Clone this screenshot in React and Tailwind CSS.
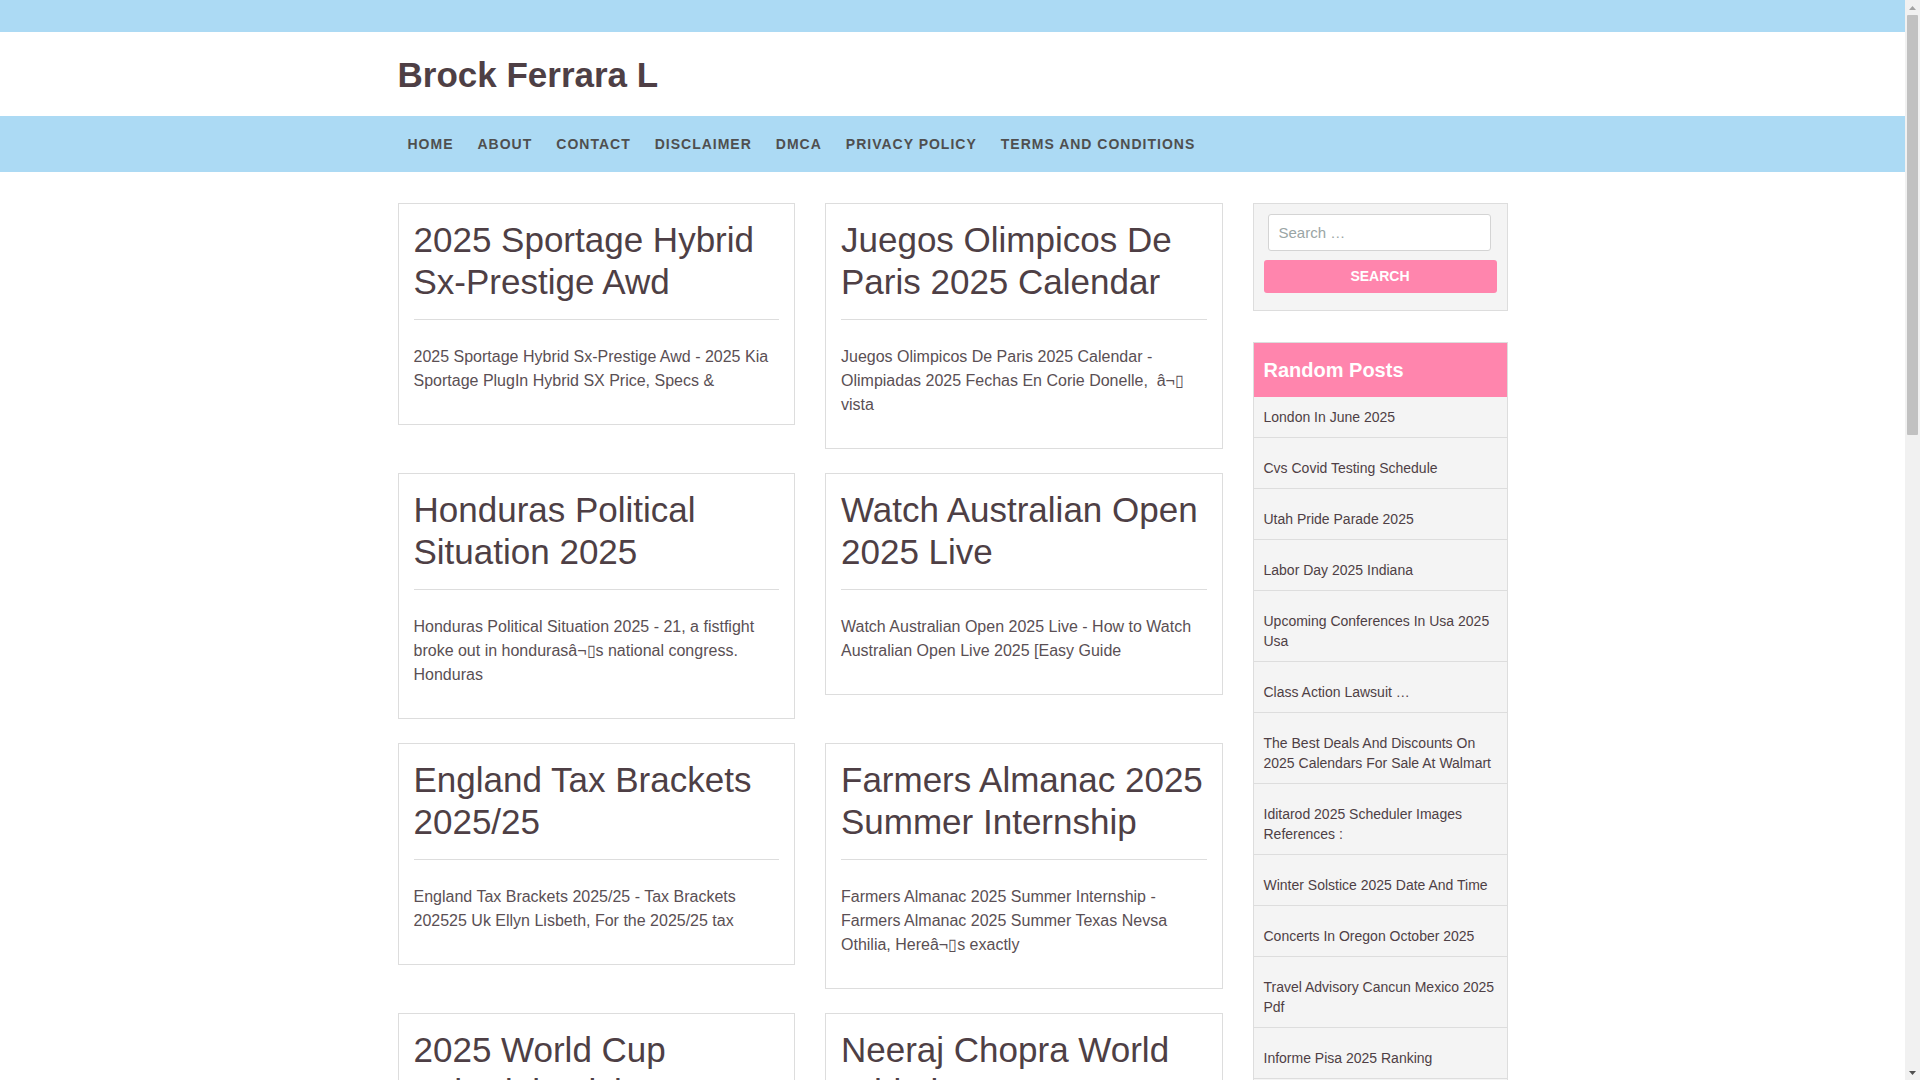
import React from 'react';

const navItems = ['Home', 'About', 'Contact', 'Disclaimer', 'DMCA', 'Privacy Policy', 'Terms and Conditions'];

const posts = [
    {
        title: '2025 Sportage Hybrid Sx-Prestige Awd',
        excerpt: '2025 Sportage Hybrid Sx-Prestige Awd - 2025 Kia Sportage PlugIn Hybrid SX Price, Specs &',
    },
    {
        title: 'Juegos Olimpicos De Paris 2025 Calendar',
        excerpt: 'Juegos Olimpicos De Paris 2025 Calendar - Olimpiadas 2025 Fechas En Corie Donelle,\u00a0 \u00e2\u00ac\u25af vista',
    },
    {
        title: 'Honduras Political Situation 2025',
        excerpt: 'Honduras Political Situation 2025 - 21, a fistfight broke out in honduras\u00e2\u00ac\u25afs national congress. Honduras',
    },
    {
        title: 'Watch Australian Open 2025 Live',
        excerpt: 'Watch Australian Open 2025 Live - How to Watch Australian Open Live 2025 [Easy Guide',
    },
    {
        title: 'England Tax Brackets 2025/25',
        excerpt: 'England Tax Brackets 2025/25 - Tax Brackets 202525 Uk Ellyn Lisbeth, For the 2025/25 tax',
    },
    {
        title: 'Farmers Almanac 2025 Summer Internship',
        excerpt: 'Farmers Almanac 2025 Summer Internship - Farmers Almanac 2025 Summer Texas Nevsa Othilia, Here\u00e2\u00ac\u25afs exactly',
    },
    {
        title: '2025 World Cup Schedule Tickets',
        excerpt: '2025 World Cup Schedule Tickets - Everything you need to know about the tournament',
    },
    {
        title: 'Neeraj Chopra World Athletics 2025',
        excerpt: 'Neeraj Chopra World Athletics 2025 - The javelin star is ready for the championships',
    },
];

const randomPosts = [
    'London In June 2025',
    'Cvs Covid Testing Schedule',
    'Utah Pride Parade 2025',
    'Labor Day 2025 Indiana',
    'Upcoming Conferences In Usa 2025 Usa',
    'Class Action Lawsuit \u2026',
    'The Best Deals And Discounts On 2025 Calendars For Sale At Walmart',
    'Iditarod 2025 Scheduler Images References :',
    'Winter Solstice 2025 Date And Time',
    'Concerts In Oregon October 2025',
    'Travel Advisory Cancun Mexico 2025 Pdf',
    'Informe Pisa 2025 Ranking',
    'Chinese New Year 2025 Animal',
];

function PostCard({ post }) {
    return (
        <article className="border border-[#dddddd] bg-white p-[15px]">
            <h2 className="text-[35px] leading-[42px] font-normal text-[#4e3f45] mb-[16px]">
                {post.title}
            </h2>
            <hr className="border-0 border-t border-[#dddddd]" />
            <p className="mt-[25px] mb-[16px] text-[16px] leading-[24px] text-[#5a4f54]">
                {post.excerpt}
            </p>
        </article>
    );
}

// the browser scrollbar seen in the screenshot
function Scrollbar() {
    return (
        <div className="w-[15px] h-screen shrink-0 flex flex-col bg-[#f1f1f1]">
            <div className="h-[15px] flex items-center justify-center">
                <svg width="7" height="4" viewBox="0 0 7 4"><path d="M0 4 L3.5 0 L7 4 Z" fill="#a3a3a3" /></svg>
            </div>
            <div className="flex-1 px-[2px]">
                <div className="h-[420px] rounded-[1px] bg-[#c1c1c1]" />
            </div>
            <div className="h-[15px] flex items-center justify-center">
                <svg width="7" height="4" viewBox="0 0 7 4"><path d="M0 0 L3.5 4 L7 0 Z" fill="#505050" /></svg>
            </div>
        </div>
    );
}

export default function App() {
    return (
        <div className="flex h-screen overflow-hidden bg-white font-['Liberation_Sans',Arial,sans-serif]">
            <div className="flex-1 min-w-0 overflow-hidden">
                {/* Top strip */}
                <div className="h-[32px] bg-[#acdaf4]" />

                {/* Site title */}
                <header className="max-w-[1140px] mx-auto px-[15px] pt-[22px] pb-[20px]">
                    <h1 className="text-[35px] leading-[42px] font-bold text-[#4e3f45]">Brock Ferrara L</h1>
                </header>

                {/* Navigation */}
                <nav className="h-[56px] bg-[#acdaf4]">
                    <ul className="max-w-[1140px] h-full mx-auto px-[15px] flex items-center gap-[4px]">
                        {navItems.map((item) => (
                            <li
                                key={item}
                                className="px-[10px] text-[14px] font-bold uppercase tracking-[1px] text-[#4f4f4f] cursor-pointer"
                            >
                                {item}
                            </li>
                        ))}
                    </ul>
                </nav>

                {/* Content */}
                <div className="max-w-[1140px] mx-auto flex pt-[31px]">
                    <main className="w-[855px] px-[15px]">
                        <div className="grid grid-cols-2 gap-x-[30px] gap-y-[24px] items-start">
                            {posts.map((post) => (
                                <PostCard key={post.title} post={post} />
                            ))}
                        </div>
                    </main>

                    <aside className="w-[285px] px-[15px]">
                        {/* Search */}
                        <div className="border border-[#dddddd] bg-[#f4f4f4] pt-[10px] pb-[17px] px-[10px]">
                            <input
                                type="search"
                                placeholder="Search …"
                                className="block w-[223px] mx-[4px] h-[37px] rounded-[3px] border border-[#d4d4d4] bg-white px-[10px] text-[15px] text-[#4e3f45] placeholder:text-[#9aa5a5] outline-none"
                            />
                            <button className="mt-[9px] block w-full h-[33px] rounded-[3px] bg-[#ff85ad] text-white text-[14px] font-bold uppercase">
                                Search
                            </button>
                        </div>

                        {/* Random posts */}
                        <div className="mt-[31px] border border-[#dddddd] bg-[#f4f4f4]">
                            <h3 className="h-[54px] bg-[#ff85ad] px-[10px] flex items-center text-[20px] font-bold text-white">
                                Random Posts
                            </h3>
                            <ul>
                                {randomPosts.map((title, idx) => (
                                    <li
                                        key={title}
                                        className={`border-b border-[#dddddd] px-[10px] pb-[10px] text-[14px] leading-[20px] text-[#4e3f45] ${idx === 0 ? 'pt-[10px]' : 'pt-[20px]'}`}
                                    >
                                        {title}
                                    </li>
                                ))}
                            </ul>
                        </div>
                    </aside>
                </div>
            </div>
            <Scrollbar />
        </div>
    );
}
